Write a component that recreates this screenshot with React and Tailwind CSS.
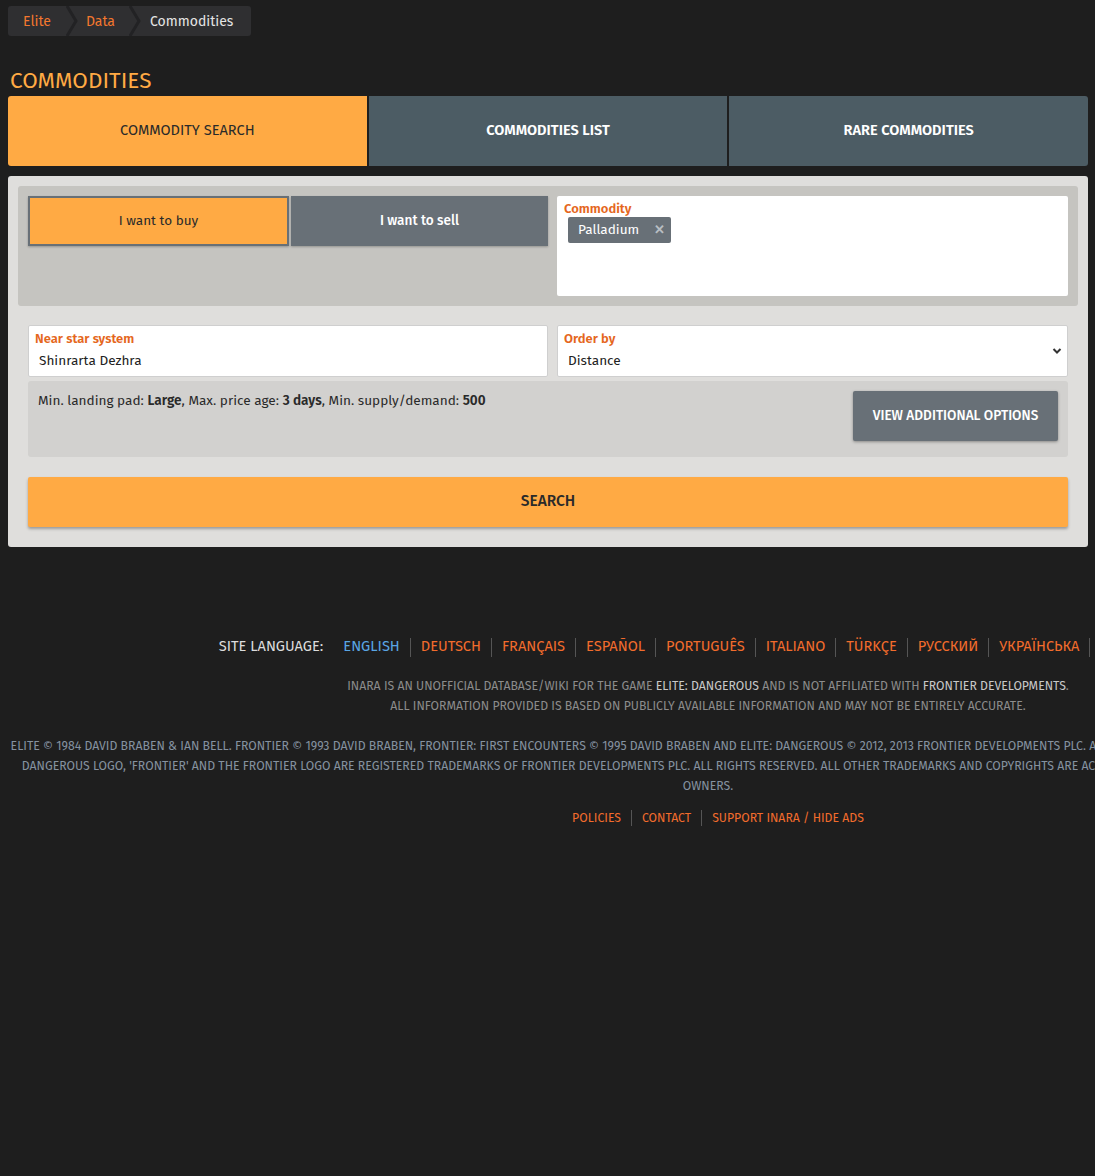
import React from "react";

const F = { fontFamily: '"Fira Sans", "Liberation Sans Narrow", Roboto, sans-serif' };

function Chevron() {
  return (
    <svg width="12" height="30" viewBox="0 0 12 30" className="block shrink-0">
      <path d="M1 0 L10 15 L1 30" fill="none" stroke="#222224" strokeWidth="3" />
    </svg>
  );
}

function Sep() {
  return <span className="inline-block w-px h-[19px] bg-[#555] mx-[10px] align-middle" />;
}

export default function App() {
  const langs = ["DEUTSCH", "FRANÇAIS", "ESPAÑOL", "PORTUGUÊS", "ITALIANO", "TÜRKÇE", "РУССКИЙ", "УКРАЇНСЬКА", "NEDERLANDS"];
  return (
    <div className="min-h-[1176px] w-[1095px] overflow-hidden bg-[#1e1e1e]" style={F}>
      <div className="ml-2 w-[1080px] pt-[6px]">
        {/* breadcrumb */}
        <div className="inline-flex h-[30px] items-center rounded-[3px] bg-[#2f2f31] text-[14px]">
          <span className="pl-[15px] pr-[15px] text-[#f3772e]">Elite</span>
          <Chevron />
          <span className="pl-[8px] pr-[14px] text-[#f3772e]">Data</span>
          <Chevron />
          <span className="pl-[9px] pr-[18px] text-[#e4e4e4]">Commodities</span>
        </div>

        <h1 className="mt-[33px] pl-[2px] text-[22.5px] leading-[24px] text-[#ffaa44]">COMMODITIES</h1>

        {/* tabs */}
        <div className="mt-[3px] grid grid-cols-3 gap-[2px]">
          <div className="flex h-[70px] items-center justify-center rounded-l-[3px] bg-[#ffaa44] text-[14.6px] text-[#2a2a2a]">COMMODITY SEARCH</div>
          <div className="flex h-[70px] items-center justify-center bg-[#4c5c64] text-[14.6px] font-semibold text-white">COMMODITIES LIST</div>
          <div className="flex h-[70px] items-center justify-center rounded-r-[3px] bg-[#4c5c64] text-[14.6px] font-semibold text-white">RARE COMMODITIES</div>
        </div>

        {/* panel */}
        <div className="mt-[10px] rounded-[3px] bg-[#dfdedc] p-[10px]">
          <div className="flex gap-[9px] rounded-[3px] bg-[#c5c4c0] p-[10px]">
            <div className="flex h-[50px] flex-1 gap-[2px]">
              <button className="flex-1 border-2 border-[#687077] bg-[#ffaa44] text-[13.5px] text-[#2a2a2a] shadow-[0_1px_2px_rgba(0,0,0,0.25)]">I want to buy</button>
              <button className="flex-1 bg-[#687077] text-[13.6px] font-medium text-white shadow-[0_1px_2px_rgba(0,0,0,0.25)]">I want to sell</button>
            </div>
            <div className="h-[100px] w-[511px] rounded-[2px] bg-white px-[7px] pt-[5px]">
              <div className="text-[13px] font-semibold leading-[15px] text-[#e5671d]">Commodity</div>
              <div className="ml-[4px] mt-[1px] inline-flex h-[26px] items-center rounded-[2px] bg-[#687077] pl-[10px] pr-[6px] text-[13.6px] text-white">
                Palladium
                <span className="ml-[15px] text-[13px] font-bold text-[#b8bec3]">✕</span>
              </div>
            </div>
          </div>

          <div className="mt-[19px] px-[10px]">
            <div className="flex gap-[9px]">
              <div className="h-[52px] flex-1 rounded-[2px] border border-[#cfcfcf] bg-white px-[6px] pt-[5px]">
                <div className="text-[13px] font-semibold leading-[15px] text-[#e5671d]">Near star system</div>
                <div className="ml-[4px] mt-[6px] text-[13.6px] leading-[17px] text-[#222]">Shinrarta Dezhra</div>
              </div>
              <div className="relative h-[52px] w-[511px] rounded-[2px] border border-[#cfcfcf] bg-white px-[6px] pt-[5px]">
                <div className="text-[13px] font-semibold leading-[15px] text-[#e5671d]">Order by</div>
                <div className="ml-[4px] mt-[6px] text-[13.6px] leading-[17px] text-[#222]">Distance</div>
                <svg className="absolute right-[5px] top-[21px]" width="10" height="8" viewBox="0 0 10 8">
                  <path d="M1.5 2 L5 5.5 L8.5 2" fill="none" stroke="#333" strokeWidth="2" />
                </svg>
              </div>
            </div>

            <div className="mt-[4px] flex h-[76px] justify-between rounded-[3px] bg-[#d2d1cf] pl-[10px] pr-[10px] pt-[10px]">
              <div className="pt-[1px] text-[13.6px] leading-[18px] text-[#2a2a2a]">
                Min. landing pad: <b className="font-semibold">Large</b>, Max. price age: <b className="font-semibold">3 days</b>, Min. supply/demand: <b className="font-semibold">500</b>
              </div>
              <button className="h-[50px] w-[205px] rounded-[2px] bg-[#687077] text-[13.6px] font-medium text-white shadow-[0_1px_3px_rgba(0,0,0,0.35)]">VIEW ADDITIONAL OPTIONS</button>
            </div>

            <button className="mb-[10px] mt-[20px] h-[50px] w-full rounded-[2px] bg-[#ffaa44] text-[15.5px] font-medium text-[#2a2a2a] shadow-[0_2px_3px_rgba(0,0,0,0.3)]">SEARCH</button>
          </div>
        </div>
      </div>

      {/* footer */}
      <div className="mt-[89px] w-[1416px] text-center">
        <div className="whitespace-nowrap text-[14.6px] leading-[20px]">
          <span className="text-[#dcdcdc]">SITE LANGUAGE:</span>
          <span className="ml-[20px] text-[#5aa6e4]">ENGLISH</span>
          {langs.map((l) => (
            <React.Fragment key={l}>
              <Sep />
              <span className="text-[#f26c2c]">{l}</span>
            </React.Fragment>
          ))}
          <span className="inline-block w-[10px]" />
        </div>
        <div className="mt-[19px] text-[12.25px] leading-[20px] text-[#8c8c8c]">
          INARA IS AN UNOFFICIAL DATABASE/WIKI FOR THE GAME <span className="text-[#c8c8c8]">ELITE: DANGEROUS</span> AND IS NOT AFFILIATED WITH <span className="text-[#c8c8c8]">FRONTIER DEVELOPMENTS</span>.
          <br />
          ALL INFORMATION PROVIDED IS BASED ON PUBLICLY AVAILABLE INFORMATION AND MAY NOT BE ENTIRELY ACCURATE.
        </div>
        <div className="mt-[20px] whitespace-nowrap text-[12.25px] leading-[20px] text-[#8592a0]">
          ELITE © 1984 DAVID BRABEN &amp; IAN BELL. FRONTIER © 1993 DAVID BRABEN, FRONTIER: FIRST ENCOUNTERS © 1995 DAVID BRABEN AND ELITE: DANGEROUS © 2012, 2013 FRONTIER DEVELOPMENTS PLC. ALL RIGHTS RESERVED. 'ELITE', THE ELITE LOGO, THE ELITE:
          <br />
          DANGEROUS LOGO, 'FRONTIER' AND THE FRONTIER LOGO ARE REGISTERED TRADEMARKS OF FRONTIER DEVELOPMENTS PLC. ALL RIGHTS RESERVED. ALL OTHER TRADEMARKS AND COPYRIGHTS ARE ACKNOWLEDGED AS THE PROPERTY OF THEIR RESPECTIVE
          <br />
          OWNERS.
        </div>
        <div className="mt-[12px] pl-[20px] text-[12.25px] leading-[20px] text-[#f26c2c]">
          POLICIES
          <span className="mx-[10px] inline-block h-[16px] w-px bg-[#555] align-middle" />
          CONTACT
          <span className="mx-[10px] inline-block h-[16px] w-px bg-[#555] align-middle" />
          SUPPORT INARA / HIDE ADS
        </div>
      </div>
    </div>
  );
}
